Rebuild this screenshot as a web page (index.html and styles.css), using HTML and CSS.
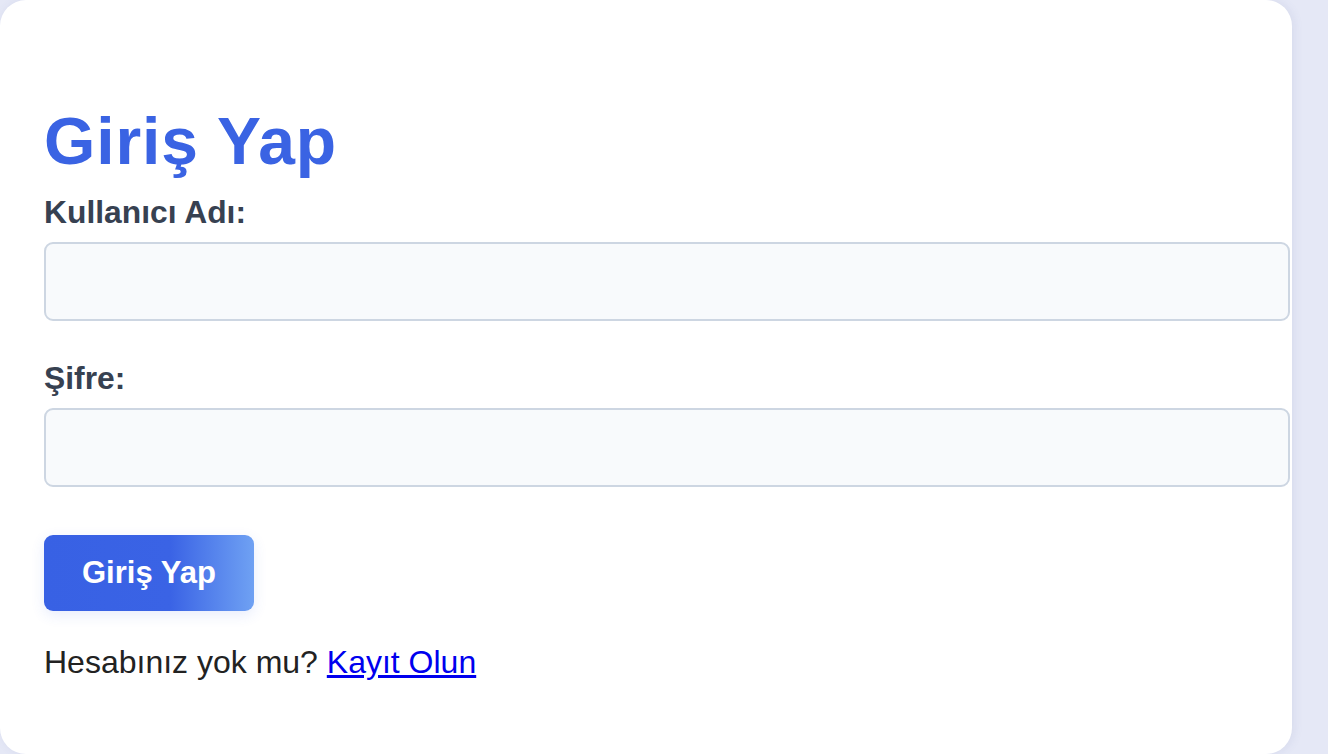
FILE: index.html
```html
<!DOCTYPE html>
<html lang="tr">
<head>
<meta charset="utf-8">
<title>Giriş Yap</title>
<link rel="stylesheet" href="styles.css">
</head>
<body>
<div class="card">
  <h1 class="title">Giriş Yap</h1>
  <form class="form">
    <label class="label" for="u">Kullanıcı Adı:</label>
    <input class="input" id="u" type="text">
    <label class="label label-second" for="p">Şifre:</label>
    <input class="input" id="p" type="password">
    <button class="btn" type="button">Giriş Yap</button>
  </form>
  <p class="note">Hesabınız yok mu? <a class="link" href="#">Kayıt Olun</a></p>
</div>
</body>
</html>
```
FILE: styles.css
```css
html, body {
  margin: 0;
  padding: 0;
}
body {
  background: #e5e8f6;
  font-family: "Liberation Sans", Arial, sans-serif;
  width: 1328px;
  height: 754px;
  overflow: hidden;
}
.card {
  box-sizing: border-box;
  width: 1292px;
  height: 754px;
  background: #ffffff;
  border-radius: 26px;
  padding: 103px 0 0 44px;
  box-shadow: 2px 0 10px rgba(90, 100, 160, 0.10);
}
.title {
  margin: 0;
  font-size: 66px;
  line-height: 76px;
  font-weight: 700;
  letter-spacing: 0.9px;
  color: #3a63e3;
}
.form {
  margin-top: 15px;
  display: flex;
  flex-direction: column;
  align-items: flex-start;
}
.label {
  font-size: 31.8px;
  line-height: 36px;
  font-weight: 700;
  color: #374151;
}
.label-second {
  margin-top: 39px;
}
.input {
  box-sizing: border-box;
  margin-top: 12px;
  width: 1246px;
  height: 79px;
  border: 2px solid #cdd6e2;
  border-radius: 9px;
  background: #f8fafc;
  font-family: inherit;
  font-size: 31px;
  padding: 0 20px;
  outline: none;
}
.btn {
  margin-top: 48px;
  height: 76px;
  padding: 0 38px;
  border: none;
  border-radius: 9px;
  background: linear-gradient(90deg, #3861e4 0%, #3a63e5 60%, #6fa1f3 100%);
  color: #ffffff;
  font-family: inherit;
  font-size: 31px;
  font-weight: 700;
  box-shadow: 0 4px 14px rgba(59, 99, 227, 0.12);
  cursor: pointer;
}
.note {
  margin: 33px 0 0 0;
  font-size: 32px;
  line-height: 36px;
  color: #222222;
}
.link {
  color: #0000ee;
  text-decoration: underline;
}
```
